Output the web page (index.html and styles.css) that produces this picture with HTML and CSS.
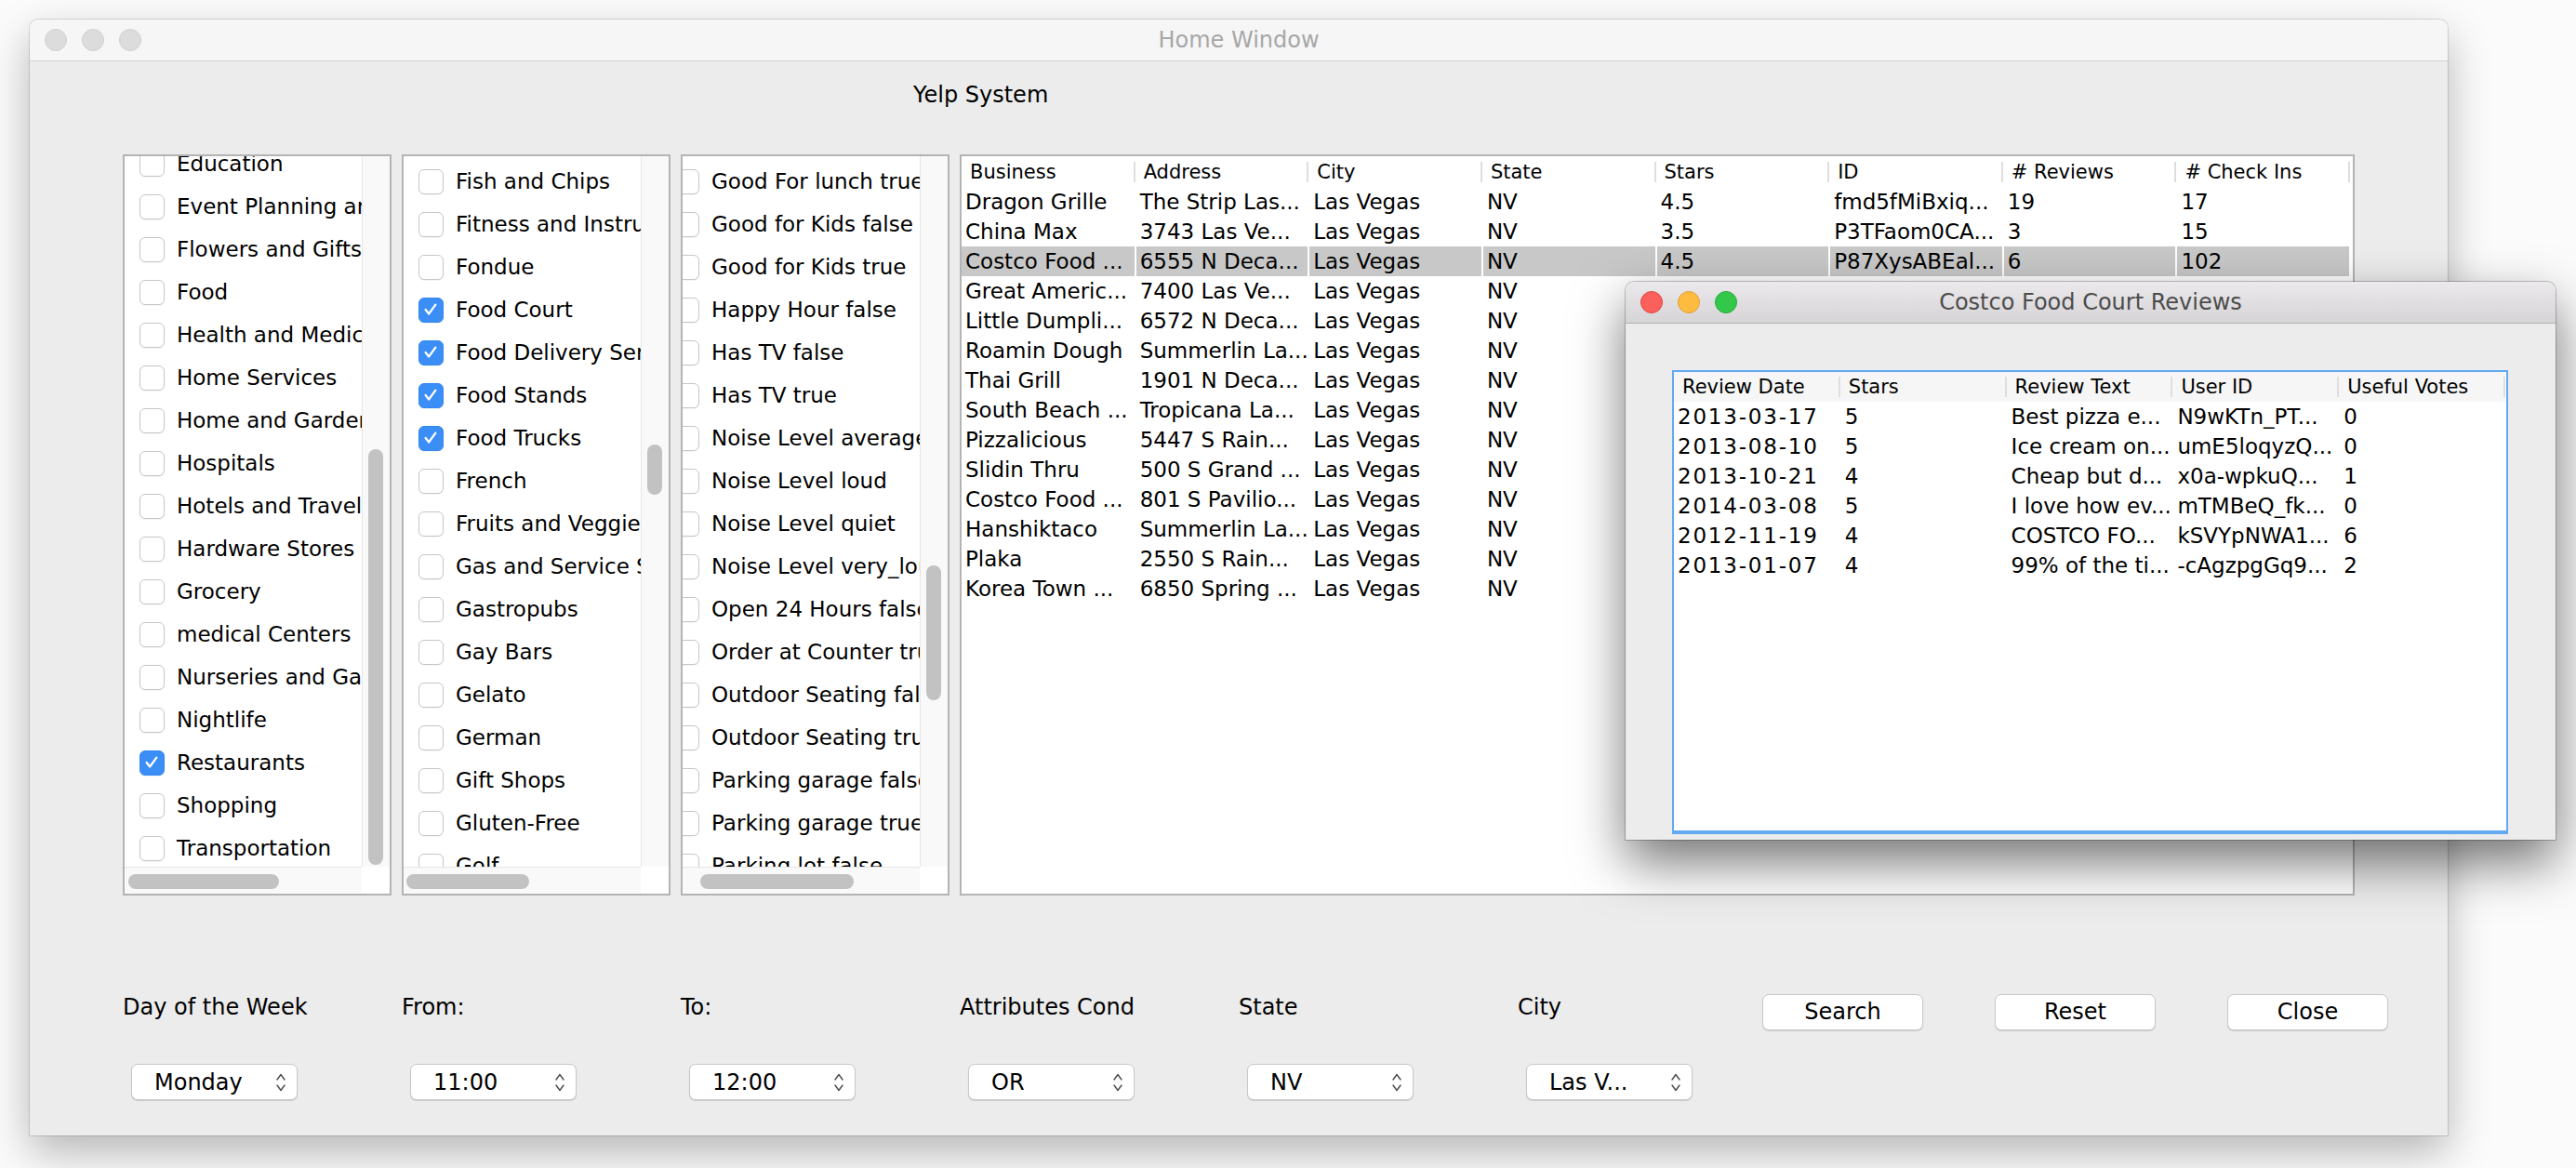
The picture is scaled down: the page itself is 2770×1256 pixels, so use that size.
FILE: index.html
```html
<!DOCTYPE html>
<html>
<head>
<meta charset="utf-8">
<title>Yelp System</title>
<link rel="stylesheet" href="styles.css">
</head>
<body>
<div class="desktop">
  <div class="window main-window">
    <div class="titlebar inactive">
      <div class="lights"><span class="light"></span><span class="light"></span><span class="light"></span></div>
      <div class="win-title">Home Window</div>
      <div></div>
    </div>
    <div class="content">
      <div class="app-title">Yelp System</div>
      <div class="panels">
        <div class="scrollpane">
          <div class="viewport">
            <ul class="checklist list-a">
              <li class="item"><span class="box"></span>Education</li>
              <li class="item"><span class="box"></span>Event Planning and Services</li>
              <li class="item"><span class="box"></span>Flowers and Gifts</li>
              <li class="item"><span class="box"></span>Food</li>
              <li class="item"><span class="box"></span>Health and Medical</li>
              <li class="item"><span class="box"></span>Home Services</li>
              <li class="item"><span class="box"></span>Home and Garden</li>
              <li class="item"><span class="box"></span>Hospitals</li>
              <li class="item"><span class="box"></span>Hotels and Travel</li>
              <li class="item"><span class="box"></span>Hardware Stores</li>
              <li class="item"><span class="box"></span>Grocery</li>
              <li class="item"><span class="box"></span>medical Centers</li>
              <li class="item"><span class="box"></span>Nurseries and Gardening</li>
              <li class="item"><span class="box"></span>Nightlife</li>
              <li class="item"><span class="box on"><svg viewBox="0 0 27 27"><path d="M7.5 13.5 L11.5 18.5 L19.5 7.5"/></svg></span>Restaurants</li>
              <li class="item"><span class="box"></span>Shopping</li>
              <li class="item"><span class="box"></span>Transportation</li>
            </ul>
          </div>
          <div class="vbar"><div class="vthumb" style="margin-top:315px;height:447px"></div></div>
          <div class="hbar"><div class="hthumb" style="margin-left:4px;width:162px"></div></div>
          <div class="corner"></div>
        </div>

        <div class="scrollpane">
          <div class="viewport">
            <ul class="checklist list-b">
              <li class="item"><span class="box"></span>Fish and Chips</li>
              <li class="item"><span class="box"></span>Fitness and Instruction</li>
              <li class="item"><span class="box"></span>Fondue</li>
              <li class="item"><span class="box on"><svg viewBox="0 0 27 27"><path d="M7.5 13.5 L11.5 18.5 L19.5 7.5"/></svg></span>Food Court</li>
              <li class="item"><span class="box on"><svg viewBox="0 0 27 27"><path d="M7.5 13.5 L11.5 18.5 L19.5 7.5"/></svg></span>Food Delivery Services</li>
              <li class="item"><span class="box on"><svg viewBox="0 0 27 27"><path d="M7.5 13.5 L11.5 18.5 L19.5 7.5"/></svg></span>Food Stands</li>
              <li class="item"><span class="box on"><svg viewBox="0 0 27 27"><path d="M7.5 13.5 L11.5 18.5 L19.5 7.5"/></svg></span>Food Trucks</li>
              <li class="item"><span class="box"></span>French</li>
              <li class="item"><span class="box"></span>Fruits and Veggies</li>
              <li class="item"><span class="box"></span>Gas and Service Stations</li>
              <li class="item"><span class="box"></span>Gastropubs</li>
              <li class="item"><span class="box"></span>Gay Bars</li>
              <li class="item"><span class="box"></span>Gelato</li>
              <li class="item"><span class="box"></span>German</li>
              <li class="item"><span class="box"></span>Gift Shops</li>
              <li class="item"><span class="box"></span>Gluten-Free</li>
              <li class="item"><span class="box"></span>Golf</li>
            </ul>
          </div>
          <div class="vbar"><div class="vthumb" style="margin-top:310px;height:54px"></div></div>
          <div class="hbar"><div class="hthumb" style="margin-left:3px;width:132px"></div></div>
          <div class="corner"></div>
        </div>

        <div class="scrollpane">
          <div class="viewport">
            <ul class="checklist list-c">
              <li class="item"><span class="box"></span>Good For lunch true</li>
              <li class="item"><span class="box"></span>Good for Kids false</li>
              <li class="item"><span class="box"></span>Good for Kids true</li>
              <li class="item"><span class="box"></span>Happy Hour false</li>
              <li class="item"><span class="box"></span>Has TV false</li>
              <li class="item"><span class="box"></span>Has TV true</li>
              <li class="item"><span class="box"></span>Noise Level average</li>
              <li class="item"><span class="box"></span>Noise Level loud</li>
              <li class="item"><span class="box"></span>Noise Level quiet</li>
              <li class="item"><span class="box"></span>Noise Level very_loud</li>
              <li class="item"><span class="box"></span>Open 24 Hours false</li>
              <li class="item"><span class="box"></span>Order at Counter true</li>
              <li class="item"><span class="box"></span>Outdoor Seating false</li>
              <li class="item"><span class="box"></span>Outdoor Seating true</li>
              <li class="item"><span class="box"></span>Parking garage false</li>
              <li class="item"><span class="box"></span>Parking garage true</li>
              <li class="item"><span class="box"></span>Parking lot false</li>
            </ul>
          </div>
          <div class="vbar"><div class="vthumb" style="margin-top:440px;height:145px"></div></div>
          <div class="hbar"><div class="hthumb" style="margin-left:19px;width:165px"></div></div>
          <div class="corner"></div>
        </div>

        <div class="tablepane">
          <table class="grid biz">
            <thead>
              <tr><th>Business</th><th>Address</th><th>City</th><th>State</th><th>Stars</th><th>ID</th><th># Reviews</th><th># Check Ins</th></tr>
            </thead>
            <tbody>
              <tr><td>Dragon Grille</td><td>The Strip Las...</td><td>Las Vegas</td><td>NV</td><td>4.5</td><td>fmd5fMiBxiq...</td><td>19</td><td>17</td></tr>
              <tr><td>China Max</td><td>3743 Las Ve...</td><td>Las Vegas</td><td>NV</td><td>3.5</td><td>P3TFaom0CA...</td><td>3</td><td>15</td></tr>
              <tr class="sel"><td>Costco Food ...</td><td>6555 N Deca...</td><td>Las Vegas</td><td>NV</td><td>4.5</td><td>P87XysABEal...</td><td>6</td><td>102</td></tr>
              <tr><td>Great Americ...</td><td>7400 Las Ve...</td><td>Las Vegas</td><td>NV</td><td></td><td></td><td></td><td></td></tr>
              <tr><td>Little Dumpli...</td><td>6572 N Deca...</td><td>Las Vegas</td><td>NV</td><td></td><td></td><td></td><td></td></tr>
              <tr><td>Roamin Dough</td><td>Summerlin La...</td><td>Las Vegas</td><td>NV</td><td></td><td></td><td></td><td></td></tr>
              <tr><td>Thai Grill</td><td>1901 N Deca...</td><td>Las Vegas</td><td>NV</td><td></td><td></td><td></td><td></td></tr>
              <tr><td>South Beach ...</td><td>Tropicana La...</td><td>Las Vegas</td><td>NV</td><td></td><td></td><td></td><td></td></tr>
              <tr><td>Pizzalicious</td><td>5447 S Rain...</td><td>Las Vegas</td><td>NV</td><td></td><td></td><td></td><td></td></tr>
              <tr><td>Slidin Thru</td><td>500 S Grand ...</td><td>Las Vegas</td><td>NV</td><td></td><td></td><td></td><td></td></tr>
              <tr><td>Costco Food ...</td><td>801 S Pavilio...</td><td>Las Vegas</td><td>NV</td><td></td><td></td><td></td><td></td></tr>
              <tr><td>Hanshiktaco</td><td>Summerlin La...</td><td>Las Vegas</td><td>NV</td><td></td><td></td><td></td><td></td></tr>
              <tr><td>Plaka</td><td>2550 S Rain...</td><td>Las Vegas</td><td>NV</td><td></td><td></td><td></td><td></td></tr>
              <tr><td>Korea Town ...</td><td>6850 Spring ...</td><td>Las Vegas</td><td>NV</td><td></td><td></td><td></td><td></td></tr>
            </tbody>
          </table>
        </div>
      </div>

      <div class="ctrl-row labels">
        <div class="cell label">Day of the Week</div>
        <div class="cell label">From:</div>
        <div class="cell label">To:</div>
        <div class="cell label">Attributes Cond</div>
        <div class="cell label">State</div>
        <div class="cell city label">City</div>
        <div class="buttons">
          <div class="btn">Search</div>
          <div class="btn">Reset</div>
          <div class="btn">Close</div>
        </div>
      </div>
      <div class="ctrl-row selects">
        <div class="cell"><div class="select"><span>Monday</span><svg class="arrows" viewBox="0 0 12 26"><path d="M2 10 L6 4.5 L10 10 M2 16 L6 21.5 L10 16"/></svg></div></div>
        <div class="cell"><div class="select"><span>11:00</span><svg class="arrows" viewBox="0 0 12 26"><path d="M2 10 L6 4.5 L10 10 M2 16 L6 21.5 L10 16"/></svg></div></div>
        <div class="cell"><div class="select"><span>12:00</span><svg class="arrows" viewBox="0 0 12 26"><path d="M2 10 L6 4.5 L10 10 M2 16 L6 21.5 L10 16"/></svg></div></div>
        <div class="cell"><div class="select"><span>OR</span><svg class="arrows" viewBox="0 0 12 26"><path d="M2 10 L6 4.5 L10 10 M2 16 L6 21.5 L10 16"/></svg></div></div>
        <div class="cell"><div class="select"><span>NV</span><svg class="arrows" viewBox="0 0 12 26"><path d="M2 10 L6 4.5 L10 10 M2 16 L6 21.5 L10 16"/></svg></div></div>
        <div class="cell"><div class="select"><span>Las V...</span><svg class="arrows" viewBox="0 0 12 26"><path d="M2 10 L6 4.5 L10 10 M2 16 L6 21.5 L10 16"/></svg></div></div>
      </div>
    </div>
  </div>

  <div class="window reviews-window">
    <div class="titlebar active">
      <div class="lights"><span class="light red"></span><span class="light yellow"></span><span class="light green"></span></div>
      <div class="win-title">Costco Food Court Reviews</div>
      <div></div>
    </div>
    <div class="rev-body">
      <div class="rev-pane">
        <table class="grid rev">
          <thead>
            <tr><th>Review Date</th><th>Stars</th><th>Review Text</th><th>User ID</th><th>Useful Votes</th></tr>
          </thead>
          <tbody>
            <tr><td class="date">2013-03-17</td><td>5</td><td>Best pizza e...</td><td>N9wKTn_PT...</td><td>0</td></tr>
            <tr><td class="date">2013-08-10</td><td>5</td><td>Ice cream on...</td><td>umE5loqyzQ...</td><td>0</td></tr>
            <tr><td class="date">2013-10-21</td><td>4</td><td>Cheap but d...</td><td>x0a-wpkuQ...</td><td>1</td></tr>
            <tr><td class="date">2014-03-08</td><td>5</td><td>I love how ev...</td><td>mTMBeQ_fk...</td><td>0</td></tr>
            <tr><td class="date">2012-11-19</td><td>4</td><td>COSTCO FO...</td><td>kSVYpNWA1...</td><td>6</td></tr>
            <tr><td class="date">2013-01-07</td><td>4</td><td>99% of the ti...</td><td>-cAgzpgGq9...</td><td>2</td></tr>
          </tbody>
        </table>
      </div>
    </div>
  </div>
</div>
</body>
</html>
```

FILE: styles.css
```css
* { box-sizing: border-box; }

html, body {
  margin: 0;
  padding: 0;
  background: #ffffff;
}

body {
  font-family: "DejaVu Sans", "Open Sans", sans-serif;
  color: #000;
}

.desktop {
  position: relative;
  width: 2770px;
  height: 1256px;
  padding: 21px 0 0 32px;
  overflow: hidden;
  background: #fbfbfb;
}

/* ---------- windows ---------- */
.window {
  background: #ececec;
  border-radius: 9px 9px 0 0;
  display: flex;
  flex-direction: column;
}

.main-window {
  width: 2600px;
  height: 1200px;
  box-shadow: 0 0 0 1px rgba(0,0,0,0.12), 0 18px 46px rgba(0,0,0,0.28);
}

.reviews-window {
  position: absolute;
  left: 1748px;
  top: 303px;
  width: 1000px;
  height: 600px;
  box-shadow: 0 0 0 1px rgba(0,0,0,0.22), 0 24px 56px rgba(0,0,0,0.55);
}

.titlebar {
  flex: none;
  height: 45px;
  display: grid;
  grid-template-columns: 1fr auto 1fr;
  align-items: center;
  border-radius: 9px 9px 0 0;
}

.titlebar.inactive {
  background: #f6f6f6;
  border-bottom: 1px solid #d3d3d3;
}

.titlebar.active {
  background: linear-gradient(#ebe9eb, #d6d4d6);
  border-bottom: 1px solid #b3b3b3;
}

.lights {
  display: flex;
  gap: 16px;
  padding-left: 16px;
}

.light {
  width: 24px;
  height: 24px;
  border-radius: 50%;
  background: #dcdcdc;
  border: 1px solid #d0d0d0;
}

.light.red { background: #fc605c; border-color: #e0443e; }
.light.yellow { background: #fdbc40; border-color: #dea236; }
.light.green { background: #34c84a; border-color: #27a83a; }

.win-title {
  font-size: 24px;
  white-space: nowrap;
}

.inactive .win-title { color: #a7a7a7; }
.active .win-title { color: #4c4c4c; }

/* ---------- main content ---------- */
.content {
  flex: 1;
  padding-left: 100px;
}

.app-title {
  font-size: 24px;
  line-height: 36px;
  margin: 18px 0 0 850px;
}

.panels {
  display: flex;
  gap: 11px;
  margin-top: 46px;
  height: 797px;
}

.scrollpane {
  flex: none;
  width: 289px;
  height: 797px;
  border: 2px solid #b4b4b4;
  background: #fff;
  display: grid;
  grid-template-columns: 255px 30px;
  grid-template-rows: 764px 29px;
}

.viewport {
  overflow: hidden;
  background: #fff;
}

.vbar {
  background: #f9f9f9;
  border-left: 1px solid #e6e6e6;
}

.vthumb {
  width: 16px;
  margin-left: 6px;
  border-radius: 8px;
  background: #c2c2c2;
}

.hbar {
  background: #f9f9f9;
  border-top: 1px solid #e6e6e6;
  padding-top: 7px;
}

.hthumb {
  height: 16px;
  border-radius: 8px;
  background: #c2c2c2;
}

.corner { background: #fff; }

.checklist {
  list-style: none;
  margin: 0;
  padding: 0;
}

.list-a { margin-top: -15px; }
.list-b { margin-top: 4px; }
.list-c { margin-top: 4px; margin-left: -25px; }

.item {
  height: 46px;
  display: flex;
  align-items: center;
  gap: 13px;
  padding-left: 16px;
  white-space: nowrap;
  font-size: 23px;
}

.box {
  flex: none;
  width: 27px;
  height: 27px;
  border: 1.5px solid #c6c6c6;
  border-radius: 6px;
  background: #fff;
  box-shadow: 0 1px 0 rgba(0,0,0,0.04);
}

.box.on {
  background: #3a8ef6;
  border-color: #3587ef;
}

.box svg {
  display: block;
  width: 24px;
  height: 24px;
  fill: none;
  stroke: #fff;
  stroke-width: 2.6;
  stroke-linecap: round;
  stroke-linejoin: round;
}

/* ---------- tables ---------- */
.tablepane {
  flex: none;
  width: 1500px;
  height: 797px;
  border: 2px solid #b4b4b4;
  background: #fff;
  overflow: hidden;
}

.grid {
  border-collapse: collapse;
  table-layout: fixed;
}

.grid th {
  font-weight: normal;
  text-align: left;
  white-space: nowrap;
  overflow: hidden;
  padding: 0 0 0 9px;
  background: #fff linear-gradient(#dedede, #dedede) no-repeat right 0 center / 2px 22px;
}

.grid td {
  white-space: nowrap;
  overflow: hidden;
  padding: 0 0 0 4px;
  border-right: 2px solid #fff;
}

.biz {
  width: 1494px;
}

.biz th {
  height: 33px;
  font-size: 21px;
}

.biz td {
  height: 32px;
  font-size: 23px;
}

.biz tr.sel td {
  background: #c8c8c8;
}

/* ---------- bottom controls ---------- */
.ctrl-row {
  display: flex;
}

.labels {
  margin-top: 102px;
  height: 44px;
}

.selects {
  margin-top: 35px;
}

.cell {
  flex: none;
  width: 300px;
}

.cell.city { width: 263px; }

.label {
  font-size: 24px;
  line-height: 36px;
}

.buttons {
  display: flex;
  gap: 77px;
  padding-top: 4px;
}

.btn {
  width: 173px;
  height: 39px;
  background: #fff;
  border: 1px solid #c8c8c8;
  border-radius: 7px;
  box-shadow: 0 1px 1px rgba(0,0,0,0.14);
  font-size: 24px;
  line-height: 37px;
  text-align: center;
}

.select {
  margin-left: 9px;
  width: 179px;
  height: 39px;
  background: #fff;
  border: 1px solid #c8c8c8;
  border-radius: 7px;
  box-shadow: 0 1px 1px rgba(0,0,0,0.14);
  display: flex;
  align-items: center;
  justify-content: space-between;
  padding: 0 11px 0 24px;
  font-size: 24px;
}

.arrows {
  width: 12px;
  height: 26px;
  fill: none;
  stroke: #4a4a4a;
  stroke-width: 1.4;
  stroke-linecap: round;
  stroke-linejoin: round;
}

/* ---------- reviews window ---------- */
.rev-body {
  flex: 1;
  padding: 50px 51px 6px 50px;
}

.rev-pane {
  height: 100%;
  background: #fff;
  border: 2px solid #62a9f2;
  border-bottom-width: 4px;
  overflow: hidden;
}

.rev {
  width: 895px;
}

.rev th {
  height: 32px;
  font-size: 21px;
  background-color: #f6f6f6;
}

.rev td {
  height: 32px;
  font-size: 23px;
}

.rev td.date {
  letter-spacing: 1.8px;
}
```
